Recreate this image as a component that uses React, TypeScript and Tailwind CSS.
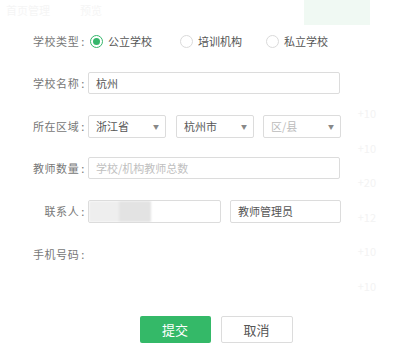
import React from 'react';

const font = { fontFamily: '"Noto Sans CJK SC", "Noto Sans", sans-serif' };

const Radio: React.FC<{ checked?: boolean; label: string; className?: string }> = ({ checked, label, className }) => (
  <label className={`flex items-center ${className ?? ''}`}>
    <span
      className={`w-[13px] h-[13px] rounded-full border flex items-center justify-center ${
        checked ? 'border-[#35b66b]' : 'border-[#dadada]'
      }`}
    >
      {checked && <span className="w-[7px] h-[7px] rounded-full bg-[#35b66b]" />}
    </span>
    <span className="ml-[5px] text-[11px] text-[#555]">{label}</span>
  </label>
);

const Select: React.FC<{ value: string; placeholder?: boolean; className?: string }> = ({ value, placeholder, className }) => (
  <div
    className={`h-[23px] border border-[#dcdcdc] rounded-[2px] flex items-center justify-between pl-[7px] pr-[6px] ${className ?? ''}`}
  >
    <span className={`text-[11px] ${placeholder ? 'text-[#bbb]' : 'text-[#555]'}`}>{value}</span>
    <span className="text-[6px] text-[#888]">▼</span>
  </div>
);

const Row: React.FC<{ label: string; children?: React.ReactNode }> = ({ label, children }) => (
  <div className="flex items-center h-[22px]">
    <div className="w-[88px] text-right text-[11px] text-[#777] pr-[3px] tracking-[0.6px]">
      {label}
      <span className="ml-[2px]">:</span>
    </div>
    <div className="flex items-center flex-1">{children}</div>
  </div>
);

const App: React.FC = () => {
  return (
    <div className="relative w-[406px] h-[354px] bg-white overflow-hidden" style={font}>
      {/* faded page behind the dialog */}
      <div className="flex justify-between text-[11px] text-[#f5f5f5]">
        <div className="flex gap-[30px] pt-[2px] pl-[6px]">
          <span>首页管理</span>
          <span>预览</span>
        </div>
        <div className="w-[66px] h-[25px] bg-[#f0f9f3] mr-[36px]" />
      </div>
      <div className="flex flex-col items-end pr-[30px] pt-[80px] gap-[18px] text-[11px] text-[#f3f3f3]">
        <span>+10</span>
        <span>+10</span>
        <span>+20</span>
        <span>+12</span>
        <span>+10</span>
        <span>+10</span>
      </div>

      {/* dialog */}
      <div className="absolute inset-0 flex flex-col pt-[30px] gap-[20px]">
        <Row label="学校类型">
          <Radio checked label="公立学校" className="ml-[2px]" />
          <Radio label="培训机构" className="ml-[28px]" />
          <Radio label="私立学校" className="ml-[24px]" />
        </Row>
        <Row label="学校名称">
          <div className="w-[252px] h-[22px] border border-[#dcdcdc] rounded-[2px] flex items-center pl-[7px] text-[11px] text-[#555]">
            杭州
          </div>
        </Row>
        <div className="mt-[1px]">
          <Row label="所在区域">
            <Select value="浙江省" className="w-[78px]" />
            <Select value="杭州市" className="w-[78px] ml-[10px]" />
            <Select value="区/县" placeholder className="w-[78px] ml-[9px]" />
          </Row>
        </div>
        <Row label="教师数量">
          <div className="w-[252px] h-[22px] border border-[#dcdcdc] rounded-[2px] flex items-center pl-[7px] text-[11px] text-[#c0c0c0]">
            学校/机构教师总数
          </div>
        </Row>
        <div className="mt-[1px]">
          <Row label="联系人">
            <div className="w-[133px] h-[23px] border border-[#dcdcdc] rounded-[2px] flex items-stretch overflow-hidden">
              <div className="w-[62px] flex blur-[1px]">
                <div className="w-[30px] bg-[#eeeeee]" />
                <div className="w-[32px] bg-[#e3e3e3]" />
              </div>
            </div>
            <div className="w-[111px] h-[23px] ml-[9px] border border-[#dcdcdc] rounded-[2px] flex items-center pl-[7px] text-[11px] text-[#555]">
              教师管理员
            </div>
          </Row>
        </div>
        <div className="mt-[1px]">
          <Row label="手机号码" />
        </div>
        <div className="flex justify-center gap-[10px] mt-[31px] pl-[26px]">
          <div className="w-[71px] h-[27px] rounded-[2px] bg-[#34b968] text-white text-[13px] flex items-center justify-center">
            提交
          </div>
          <div className="w-[72px] h-[27px] rounded-[2px] border border-[#dcdcdc] bg-white text-[#555] text-[13px] flex items-center justify-center">
            取消
          </div>
        </div>
      </div>
    </div>
  );
};

export default App;
